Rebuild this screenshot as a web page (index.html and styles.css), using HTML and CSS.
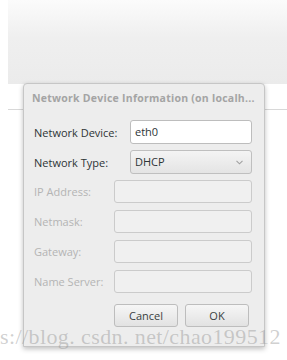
FILE: index.html
```html
<!DOCTYPE html>
<html>
<head>
<meta charset="UTF-8">
<title>Network Device Information</title>
<link rel="stylesheet" href="styles.css">
</head>
<body>
	<div class="app">
		<div class="toolbar"></div>
		<div class="band"></div>
		<div class="content"></div>
	</div>

	<div class="dialog">
		<div class="dlg-title">Network Device Information (on localh...</div>
		<div class="grid top">
			<label>Network Device:</label>
			<div class="entry active">eth0</div>
			<label>Network Type:</label>
			<div class="combo">DHCP
				<svg class="arrow" width="7" height="5" viewBox="0 0 7 5"><path d="M0.5 0.8 L3.5 3.8 L6.5 0.8" fill="none" stroke="#a0a0a0" stroke-width="1.1"/></svg>
			</div>
		</div>
		<div class="grid bottom">
			<label class="off">IP Address:</label>
			<div class="entry off"></div>
			<label class="off">Netmask:</label>
			<div class="entry off"></div>
			<label class="off">Gateway:</label>
			<div class="entry off"></div>
			<label class="off">Name Server:</label>
			<div class="entry off"></div>
		</div>
		<div class="buttons">
			<button class="btn">Cancel</button>
			<button class="btn">OK</button>
		</div>
	</div>

	<div class="mark">s://blog. csdn. net/chao199512</div>
</body>
</html>
```
FILE: styles.css
```css
html, body {
	margin: 0;
	width: 287px;
	height: 360px;
	overflow: hidden;
	background: #ffffff;
	font-family: "Open Sans", "DejaVu Sans", sans-serif;
	position: relative;
}
.app {
	margin-left: 8px;
}
.toolbar {
	height: 84px;
	background: linear-gradient(to bottom, #fbfbfb 0%, #efefef 45%, #ebebeb 100%);
}
.band {
	height: 25px;
	border-bottom: 1px solid #d8d8d8;
}

.dialog {
	position: absolute;
	left: 23px;
	top: 83px;
	width: 240px;
	height: 262px;
	background: #ededed;
	border: 1px solid #c6c6c6;
	border-radius: 4px 4px 0 0;
	box-shadow: 0 2px 5px rgba(0,0,0,0.25);
}
.dlg-title {
	height: 28px;
	line-height: 28px;
	padding-left: 8px;
	font-size: 10.5px;
	font-weight: bold;
	letter-spacing: 0.25px;
	color: #a4a4a4;
	white-space: nowrap;
}
.grid {
	display: grid;
	align-items: center;
	padding: 0 12px 0 10px;
}
.grid.top {
	margin-top: 8px;
	grid-template-columns: 96px 1fr;
	row-gap: 6px;
}
.grid.bottom {
	margin-top: 6px;
	grid-template-columns: 80px 1fr;
	row-gap: 7px;
}
label {
	font-size: 11px;
	color: #2e3436;
	white-space: nowrap;
}
label.off {
	color: #b4b4b4;
}
.entry, .combo {
	height: 24px;
	box-sizing: border-box;
	border: 1px solid #c2c2c2;
	border-radius: 3px;
	font-size: 11px;
	line-height: 22px;
	padding-left: 4px;
	color: #2e3436;
}
.entry.active {
	background: #ffffff;
	border-color: #bdbdbd;
}
.entry.off {
	height: 23px;
	background: #f0f0f0;
	border-color: #cbcbcb;
}
.combo {
	position: relative;
	background: linear-gradient(to bottom, #f4f4f4, #e4e4e4);
	border-color: #bfbfbf;
}
.arrow {
	position: absolute;
	right: 8px;
	top: 9px;
}
.buttons {
	display: flex;
	gap: 7px;
	margin: 11px 0 0 90px;
}
.btn {
	width: 64px;
	height: 23px;
	padding: 0;
	font-family: "Open Sans", "DejaVu Sans", sans-serif;
	font-size: 11px;
	color: #3a3f41;
	background: linear-gradient(to bottom, #f6f6f6, #e2e2e2);
	border: 1px solid #bdbdbd;
	border-radius: 3px;
}

.mark {
	position: absolute;
	left: 0;
	top: 324px;
	font-family: "Liberation Serif", serif;
	font-size: 22px;
	letter-spacing: 0.4px;
	color: rgba(150,150,150,0.45);
	white-space: nowrap;
}
```
